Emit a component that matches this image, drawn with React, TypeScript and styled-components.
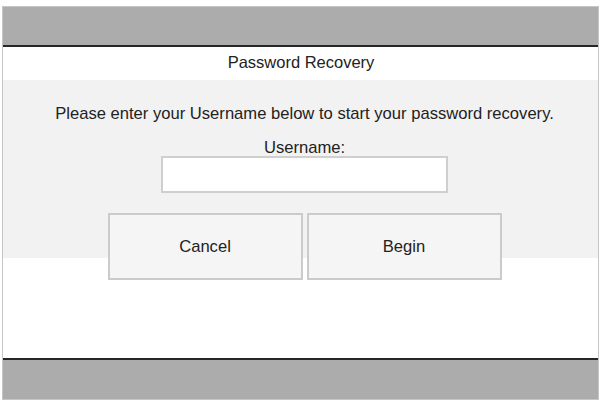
import React from "react";
import styled, { createGlobalStyle } from "styled-components";

const GlobalStyle = createGlobalStyle`
  html, body {
    margin: 0;
    padding: 0;
    background: #ffffff;
    font-family: "Liberation Sans", Arial, sans-serif;
  }
  * { box-sizing: border-box; }
`;

const Frame = styled.div`
  margin: 6px 0 0 2px;
  width: 597px;
  height: 394px;
  border: 1px solid #c6c6c6;
  display: flex;
  flex-direction: column;
  background: #ffffff;
`;

const Bar = styled.div<{ $edge: "top" | "bottom" }>`
  height: ${(p) => (p.$edge === "top" ? 40 : 41)}px;
  flex: none;
  background: #acacac;
  ${(p) =>
    p.$edge === "top"
      ? "border-bottom: 2px solid #262626;"
      : "border-top: 2px solid #262626;"}
`;

const Title = styled.div`
  height: 33px;
  flex: none;
  display: flex;
  align-items: center;
  justify-content: center;
  font-size: 16.5px;
  color: #222222;
  padding-left: 1px;
  padding-bottom: 3px;
`;

const Panel = styled.div`
  height: 178px;
  flex: none;
  background: #f2f2f2;
  display: flex;
  flex-direction: column;
  align-items: center;
  padding-top: 24px;
  color: #222222;
  & > * {
    flex: none;
  }
`;

const Message = styled.div`
  font-size: 16.6px;
  line-height: 19px;
  margin-left: 8px;
`;

const Label = styled.div`
  font-size: 16.6px;
  line-height: 19px;
  margin-top: 15px;
  margin-left: 8px;
`;

const Input = styled.input`
  width: 287px;
  height: 37px;
  margin-top: -1px;
  margin-left: 8px;
  border: 2px solid #cfcfcf;
  background: #ffffff;
  outline: none;
  font-family: inherit;
  font-size: 16px;
  padding: 0 6px;
`;

const ButtonRow = styled.div`
  display: flex;
  gap: 4px;
  margin-top: 20px;
  margin-left: 8px;
`;

const Button = styled.button`
  width: 195px;
  height: 67px;
  border: 2px solid #cbcbcb;
  background: #f5f5f5;
  font-family: "Liberation Sans", Arial, sans-serif;
  font-size: 16.6px;
  color: #222222;
  padding: 0 0 0 0;
  cursor: pointer;
`;

const Spacer = styled.div`
  flex: 1;
`;

export default function App() {
  return (
    <>
      <GlobalStyle />
      <Frame>
        <Bar $edge="top" />
        <Title>Password Recovery</Title>
        <Panel>
          <Message>
            Please enter your Username below to start your password recovery.
          </Message>
          <Label>Username:</Label>
          <Input type="text" />
          <ButtonRow>
            <Button>Cancel</Button>
            <Button>Begin</Button>
          </ButtonRow>
        </Panel>
        <Spacer />
        <Bar $edge="bottom" />
      </Frame>
    </>
  );
}
